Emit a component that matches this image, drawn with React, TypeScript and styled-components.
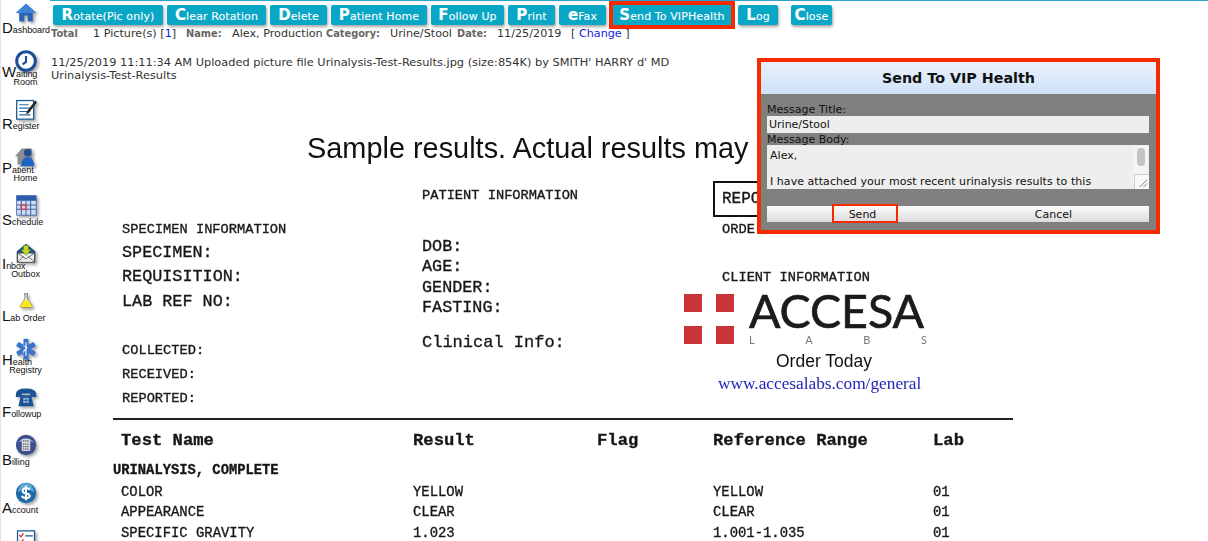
import React from "react";
import styled, { createGlobalStyle } from "styled-components";

const Global = createGlobalStyle`
  html, body { margin: 0; padding: 0; background: #fff; height: 541px; overflow: hidden; }
  #root { height: 541px; overflow: hidden; }
  * { box-sizing: border-box; }
`;

const Shell = styled.div`
  position: relative; display: flex; width: 1208px; height: 541px; overflow: hidden;
  font-family: "DejaVu Sans", Verdana, sans-serif; color: #222;
`;
const Sidebar = styled.nav`
  flex: 0 0 50px; height: 541px; overflow: hidden; border-left: 1px solid #e4e4e4;
`;
const NavItem = styled.div`
  height: 48px; padding-top: 2px; display: flex; flex-direction: column; align-items: center; position: relative;
`;
const NavIcon = styled.svg`
  width: 22px; height: 22px; flex: none; filter: drop-shadow(2px 2px 1.5px rgba(0,0,0,.35));
`;
const NavLabel = styled.div<{ $double?: boolean }>`
  align-self: flex-start; padding-left: 1px; margin-top: ${p => (p.$double ? "-5px" : "-1px")};
  font: 9px/9px "Liberation Sans", Arial, sans-serif; color: #111; white-space: nowrap; width: 49px; letter-spacing: -.05px;
`;
const Big = styled.span`
  font-size: 15px; line-height: 10px; color: #111;
`;
const NavSecond = styled.div`
  text-align: center; padding-right: 1px; line-height: 7px;
`;

const Main = styled.main`
  flex: 1; min-width: 0; position: relative;
`;
const TopLine = styled.div`height: 1px; background: #2fa2d0; margin-bottom: 4px;`;
const Toolbar = styled.div`display: flex; padding-left: 3px; height: 20px;`;
const TBtn = styled.div<{ $w: number; $ml: number; $hot?: boolean }>`
  width: ${p => p.$w}px; margin-left: ${p => p.$ml}px; height: 20px; flex: none;
  background: #0aa6c6; color: #fff; display: flex; align-items: baseline; justify-content: center;
  font-size: 11px; line-height: 20px; letter-spacing: .1px; white-space: nowrap;
  border-radius: ${p => (p.$hot ? "0" : "2px")};
  box-shadow: ${p => (p.$hot ? "0 0 0 4px #f52a00" : "1px 2px 3px rgba(0,0,0,.35)")};
  -webkit-text-stroke: .1px #fff;
`;
const TBig = styled.b`font-size: 15px; font-weight: 700;`;

const InfoRow = styled.div`
  display: flex; height: 14px; margin-top: 2px; padding-left: 1px; font-size: 11.2px; line-height: 14px; white-space: nowrap; color: #333;
`;
const InfoLabel = styled.b<{ $w: number }>`flex: 0 0 ${p => p.$w}px; color: #666; font-size: 9.8px;`;
const InfoVal = styled.span<{ $w: number }>`flex: 0 0 ${p => p.$w}px;`;
const BlueLink = styled.span`color: #1a1ae0;`;

const LogBlock = styled.div`
  margin-top: 15px; padding-left: 1px; font-size: 11.35px; line-height: 13px; color: #333; white-space: nowrap;
`;

const Doc = styled.section`
  margin-top: 46px; margin-left: 63px; width: 900px; color: #151515;
  font-family: "Liberation Mono", "Courier New", monospace; -webkit-text-stroke: .35px #222; filter: blur(.25px);
`;
const DocTitle = styled.div`
  height: 40px; padding-left: 194px; font: 28.9px/40px "Liberation Sans", Arial, sans-serif; -webkit-text-stroke: 0; color: #111; white-space: nowrap;
`;
const Columns = styled.div`
  display: grid; grid-template-columns: 309px 291px 1fr; height: 250px;
`;
const Col = styled.div<{ $pt: number; $pl: number }>`
  padding-top: ${p => p.$pt}px; padding-left: ${p => p.$pl}px; display: flex; flex-direction: column; white-space: nowrap; position: relative;
`;
const DocLine = styled.div<{ $size: number; $h: number; $mb?: number }>`
  font-size: ${p => p.$size}px; line-height: ${p => p.$h}px; height: ${p => p.$h}px; margin-bottom: ${p => p.$mb ?? 0}px;
`;
const ReportBox = styled.div`
  width: 100px; height: 36px; border: 2px solid #111; font-size: 16px; line-height: 32px; padding-left: 7px; margin: 0 0 3px -9px;
`;
const Rule = styled.div`height: 2px; background: #222;`;
const TableGrid = styled.div`
  display: grid; grid-template-columns: 292px 184px 116px 220px 1fr; padding-left: 8px; white-space: nowrap;
`;
const HeadCell = styled.div`
  font-size: 17.2px; line-height: 20px; height: 20px; font-weight: 700; margin-top: 11px;
`;
const Section = styled.div`
  font-size: 13.8px; line-height: 20px; font-weight: 700; height: 21px; margin-top: 10px;
`;
const RowCell = styled.div`font-size: 13.9px; line-height: 20.4px; height: 20.4px;`;

const Logo = styled.div`
  display: flex; align-items: flex-start; gap: 15px; margin: 6px 0 0 -38px; width: 250px; -webkit-text-stroke: 0;
`;
const LogoMark = styled.svg`width: 50px; height: 50px; flex: none;`;
const LogoBody = styled.div`display: flex; flex-direction: column; width: 178px;`;
const LogoWord = styled.div`
  font: 400 46.5px/32px Lato, "Open Sans", sans-serif; color: #1b1b1b; -webkit-text-stroke: .7px #1b1b1b;
`;
const LogoSub = styled.div`
  display: flex; justify-content: space-between; font: 11px/14px Lato, sans-serif; color: #777; margin-top: 7px;
`;
const OrderToday = styled.div`
  font: 17.5px/20px "Liberation Sans", Arial, sans-serif; -webkit-text-stroke: 0; color: #111; width: 204px; text-align: center; margin-top: 4px;
`;
const OrderLink = styled.div`
  font: 17.3px/20px "Liberation Serif", "Times New Roman", serif; -webkit-text-stroke: 0; color: #2424b8; margin: 3px 0 0 -4px;
`;

const Dialog = styled.div`
  position: absolute; left: 757px; top: 58px; width: 403px; height: 176px; border: 4px solid #f52a00; background: #808080; color: #111;
`;
const DialogTitle = styled.div`
  height: 32px; background: linear-gradient(#e9f1fb, #cfe2f8); text-align: center; font-size: 14.3px; line-height: 32px; font-weight: 700; color: #111;
`;
const DialogBody = styled.div`padding: 9px 7px 0 6px; font-size: 11px;`;
const FieldLabel = styled.div`line-height: 13px; height: 13px;`;
const TitleInput = styled.div`
  height: 17px; background: #eee; padding-left: 2px; line-height: 17px;
`;
const BodyArea = styled.div`
  position: relative; height: 44px; background: #eee; padding: 4px 20px 0 3px; line-height: 13px; overflow: hidden; white-space: nowrap; margin-top: -1px; letter-spacing: .05px;
`;
const BodyPara = styled.div`margin-bottom: 13px;`;
const ScrollTrack = styled.div`
  position: absolute; right: 1px; top: 1px; bottom: 1px; width: 15px; background: #f4f4f4;
`;
const ScrollThumb = styled.div`
  position: absolute; right: 4px; top: 3px; width: 8px; height: 18px; border-radius: 4px; background: #c4c4c4;
`;
const Grip = styled.svg`position: absolute; right: 0; bottom: 0; width: 15px; height: 15px; background: #fafafa; border-left: 1px solid #ccc; border-top: 1px solid #ccc;`;
const DialogActions = styled.div`
  display: grid; grid-template-columns: 1fr 1fr; height: 16px; margin-top: 17px; background: linear-gradient(#fbfbfb, #dcdcdc);
`;
const ActionBtn = styled.div`text-align: center; line-height: 17px; position: relative;`;
const SendMark = styled.div`
  position: absolute; left: 65px; top: -2px; width: 66px; height: 19px; border: 2px solid #f52a00;
`;

const Home = () => <>
  <path d="M13 2 1 13h4v10h6v-7h4v7h6V13h4z" fill="#2a62b4" /><path d="M13 2 1 13h24z" fill="#3f83d8" />
</>;
const Clock = () => <>
  <circle cx="13" cy="13" r="11" fill="#fff" stroke="#1d4d96" strokeWidth="3.5" />
  <path d="M13 7v7l-4 3" fill="none" stroke="#1d4d96" strokeWidth="2.5" />
</>;
const Register = () => <>
  <rect x="2" y="3" width="20" height="22" fill="#fff" stroke="#1c5a96" strokeWidth="1.5" />
  <path d="M5 8h11M5 12h13M5 16h13M5 20h13" stroke="#2a6aa8" strokeWidth="1.3" />
  <path d="M14 16 24 3l2 2-10 13-3 1z" fill="#222" />
</>;
const PatientHome = () => <>
  <path d="M8 3 0 12h3v10h17V3z" fill="#8c8c8c" />
  <circle cx="15" cy="8" r="4.5" fill="#1d4d96" />
  <path d="M7 24q1-11 8-11t8 11z" fill="#1f63c4" />
</>;
const Calendar = () => <>
  <rect x="2" y="2" width="23" height="23" fill="#cfdcf2" stroke="#3c66a8" />
  <rect x="2" y="2" width="23" height="6" fill="#2b5dab" />
  <path d="M7.500 8v17M13 8v17M18.500 8v17M2 13h23M2 18h23" stroke="#3c66a8" strokeWidth="1.200" />
  <rect x="7" y="13" width="6" height="5" fill="none" stroke="#e33" strokeWidth="1.300" />
</>;
const Inbox = () => <>
  <path d="M2 11 13 2l11 9v13H2z" fill="#254f86" />
  <path d="M3 13h20v11H3z" fill="#eee" stroke="#444" />
  <path d="M3 13l10 7 10-7M3 24l7-7M23 24l-7-7" fill="none" stroke="#555" />
  <path d="M10 4h6v5h3l-6 7-6-7h3z" fill="#c4d81e" stroke="#3a7a40" strokeWidth=".6" />
</>;
const Flask = () => <g transform="translate(4 3) scale(.7)">
  <path d="M10 2h6M11 2v8L3 23q0 2 2 2h16q2 0 2-2L15 10V2" fill="#f4f4f4" stroke="#555" strokeWidth="1.300" />
  <path d="M9 13h8l6 10q0 2-2 2H5q-2 0-2-2z" fill="#f6ea1e" />
</g>;
const StarLife = () => <>
  <g fill="#3b74cc">
    <rect x="10" y="1" width="6" height="24" rx="1" />
    <rect x="10" y="1" width="6" height="24" rx="1" transform="rotate(60 13 13)" />
    <rect x="10" y="1" width="6" height="24" rx="1" transform="rotate(120 13 13)" />
  </g>
  <path d="M13 5v16M10 9q6 2 3 4t-3 4" fill="none" stroke="#fff" strokeWidth="1.200" />
</>;
const Phone = () => <>
  <path d="M1 10Q1 3 13 3t12 7v3h-7V9H8v4H1z" fill="#1a5296" />
  <path d="M7 11h12l3 13H4z" fill="#1a5296" />
  <rect x="10" y="14" width="6" height="6" fill="#cfe0f6" />
  <path d="M12 14v6M14 14v6M10 17h6" stroke="#1a5296" />
</>;
const Calc = () => <>
  <circle cx="13" cy="13" r="12" fill="#3c4f8c" />
  <path d="M3 10Q13 0 23 10 13 6 3 10" fill="#8fa0cc" />
  <rect x="8" y="6" width="10" height="14" rx="1" fill="#d8d8e0" />
  <path d="M9.500 8h7M9.500 12h7M9.500 15h7M9.500 18h7" stroke="#555" strokeWidth="1.500" strokeDasharray="1.500 1" />
</>;
const Dollar = () => <>
  <circle cx="13" cy="13" r="12" fill="#1e6aa8" />
  <path d="M3 12Q5 2 13 1q8 1 10 11Q13 6 3 12" fill="#5ea6d4" />
  <path d="M17.500 9Q16 7 13 7T9 10q0 3 4 3.500t4.500 3Q17 19 13 19t-5-2.500M13 4.500v17" fill="none" stroke="#fff" strokeWidth="2.400" />
</>;
const Checks = () => <>
  <rect x="3" y="1" width="20" height="24" fill="#fff" stroke="#1c5a96" strokeWidth="1.500" />
  <path d="M5 6l2 2 3-4M5 13l2 2 3-4" fill="none" stroke="#d22" strokeWidth="1.500" />
  <path d="M12 7h9M12 14h9" stroke="#1c5a96" strokeWidth="1.500" />
</>;

type NavDef = { big?: string; rest?: string; second?: string; icon: React.ReactNode };
const nav: NavDef[] = [
  { big: "D", rest: "ashboard", icon: <Home /> },
  { big: "W", rest: "aiting", second: "Room", icon: <Clock /> },
  { big: "R", rest: "egister", icon: <Register /> },
  { big: "P", rest: "atient", second: "Home", icon: <PatientHome /> },
  { big: "S", rest: "chedule", icon: <Calendar /> },
  { big: "I", rest: "nbox", second: "Outbox", icon: <Inbox /> },
  { big: "L", rest: "ab Order", icon: <Flask /> },
  { big: "H", rest: "ealth", second: "Registry", icon: <StarLife /> },
  { big: "F", rest: "ollowup", icon: <Phone /> },
  { big: "B", rest: "illing", icon: <Calc /> },
  { big: "A", rest: "ccount", icon: <Dollar /> },
  { icon: <Checks /> },
];

const buttons = [
  { b: "R", t: "otate(Pic only)", w: 110, ml: 0 },
  { b: "C", t: "lear Rotation", w: 99, ml: 4 },
  { b: "D", t: "elete", w: 57, ml: 4 },
  { b: "P", t: "atient Home", w: 96, ml: 4 },
  { b: "F", t: "ollow Up", w: 73, ml: 4 },
  { b: "P", t: "rint", w: 47, ml: 4 },
  { b: "e", t: "Fax", w: 47, ml: 4 },
  { b: "S", t: "end To VIPHealth", w: 118, ml: 7, hot: true },
  { b: "L", t: "og", w: 40, ml: 7 },
  { b: "C", t: "lose", w: 41, ml: 13 },
];

const rows = [
  ["COLOR", "YELLOW", "YELLOW", "01"],
  ["APPEARANCE", "CLEAR", "CLEAR", "01"],
  ["SPECIFIC GRAVITY", "1.023", "1.001-1.035", "01"],
];

export default function App() {
  return (
    <Shell>
      <Global />
      <Sidebar>
        {nav.map((n, i) => (
          <NavItem key={i}>
            <NavIcon viewBox="0 0 26 26">{n.icon}</NavIcon>
            {n.big && (
              <NavLabel $double={!!n.second}>
                <Big>{n.big}</Big>{n.rest}
                {n.second && <NavSecond>{n.second}</NavSecond>}
              </NavLabel>
            )}
          </NavItem>
        ))}
      </Sidebar>
      <Main>
        <TopLine />
        <Toolbar>
          {buttons.map((b, i) => (
            <TBtn key={i} $w={b.w} $ml={b.ml} $hot={b.hot}><TBig>{b.b}</TBig>{b.t}</TBtn>
          ))}
        </Toolbar>
        <InfoRow>
          <InfoLabel $w={42}>Total</InfoLabel>
          <InfoVal $w={93}>1 Picture(s) [<BlueLink>1</BlueLink>]</InfoVal>
          <InfoLabel $w={46}>Name:</InfoLabel>
          <InfoVal $w={94}>Alex, Production</InfoVal>
          <InfoLabel $w={64}>Category:</InfoLabel>
          <InfoVal $w={67}>Urine/Stool</InfoVal>
          <InfoLabel $w={40}>Date:</InfoLabel>
          <InfoVal $w={74}>11/25/2019</InfoVal>
          <InfoVal $w={80}>[ <BlueLink>Change</BlueLink> ]</InfoVal>
        </InfoRow>
        <LogBlock>
          <div>11/25/2019 11:11:34 AM Uploaded picture file Urinalysis-Test-Results.jpg (size:854K) by SMITH' HARRY d' MD</div>
          <div>Urinalysis-Test-Results</div>
        </LogBlock>
        <Doc>
          <DocTitle>Sample results. Actual results may</DocTitle>
          <Columns>
            <Col $pt={52} $pl={9}>
              <DocLine $size={13.7} $h={20} $mb={1}>SPECIMEN INFORMATION</DocLine>
              <DocLine $size={16.8} $h={24}>SPECIMEN:</DocLine>
              <DocLine $size={16.8} $h={24.5}>REQUISITION:</DocLine>
              <DocLine $size={16.8} $h={24.5} $mb={25}>LAB REF NO:</DocLine>
              <DocLine $size={13.7} $h={24}>COLLECTED:</DocLine>
              <DocLine $size={13.7} $h={24}>RECEIVED:</DocLine>
              <DocLine $size={13.7} $h={24}>REPORTED:</DocLine>
            </Col>
            <Col $pt={18} $pl={0}>
              <DocLine $size={13.7} $h={20} $mb={31}>PATIENT INFORMATION</DocLine>
              <DocLine $size={16.8} $h={20.3}>DOB:</DocLine>
              <DocLine $size={16.8} $h={20.3}>AGE:</DocLine>
              <DocLine $size={16.8} $h={20.3}>GENDER:</DocLine>
              <DocLine $size={16.8} $h={20.3} $mb={15}>FASTING:</DocLine>
              <DocLine $size={17} $h={20}>Clinical Info:</DocLine>
            </Col>
            <Col $pt={13} $pl={9}>
              <ReportBox>REPO</ReportBox>
              <DocLine $size={13.7} $h={20} $mb={28}>ORDE</DocLine>
              <DocLine $size={13.7} $h={20}>CLIENT INFORMATION</DocLine>
              <Logo>
                <LogoMark viewBox="0 0 50 50">
                  <g fill="#cc3538">
                    <rect x="0" y="0" width="18" height="18" />
                    <rect x="32" y="0" width="18" height="18" />
                    <rect x="0" y="32" width="18" height="18" />
                    <rect x="32" y="32" width="18" height="18" />
                  </g>
                </LogoMark>
                <LogoBody>
                  <LogoWord>ACCESA</LogoWord>
                  <LogoSub><span>L</span><span>A</span><span>B</span><span>S</span></LogoSub>
                </LogoBody>
              </Logo>
              <OrderToday>Order Today</OrderToday>
              <OrderLink>www.accesalabs.com/general</OrderLink>
            </Col>
          </Columns>
          <Rule />
          <TableGrid>
            <HeadCell>Test Name</HeadCell>
            <HeadCell>Result</HeadCell>
            <HeadCell>Flag</HeadCell>
            <HeadCell>Reference Range</HeadCell>
            <HeadCell>Lab</HeadCell>
          </TableGrid>
          <Section>URINALYSIS, COMPLETE</Section>
          <TableGrid>
            {rows.map(r => (
              <React.Fragment key={r[0]}>
                <RowCell>{r[0]}</RowCell>
                <RowCell>{r[1]}</RowCell>
                <RowCell />
                <RowCell>{r[2]}</RowCell>
                <RowCell>{r[3]}</RowCell>
              </React.Fragment>
            ))}
          </TableGrid>
        </Doc>
      </Main>
      <Dialog>
        <DialogTitle>Send To VIP Health</DialogTitle>
        <DialogBody>
          <FieldLabel>Message Title:</FieldLabel>
          <TitleInput>Urine/Stool</TitleInput>
          <FieldLabel>Message Body:</FieldLabel>
          <BodyArea>
            <BodyPara>Alex,</BodyPara>
            <div>I have attached your most recent urinalysis results to this</div>
            <ScrollTrack />
            <ScrollThumb />
            <Grip viewBox="0 0 15 15"><path d="M5 13 13 5M9 13l4-4" stroke="#777" strokeWidth="1" /></Grip>
          </BodyArea>
          <DialogActions>
            <ActionBtn>Send<SendMark /></ActionBtn>
            <ActionBtn>Cancel</ActionBtn>
          </DialogActions>
        </DialogBody>
      </Dialog>
    </Shell>
  );
}
